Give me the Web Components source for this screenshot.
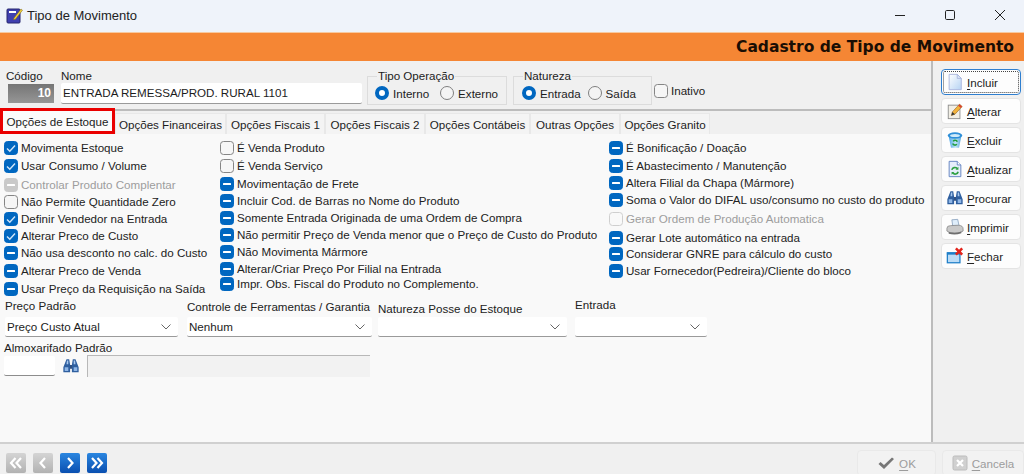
<!DOCTYPE html>
<html lang="pt-BR">
<head>
<meta charset="utf-8">
<title>Tipo de Movimento</title>
<style>
  html, body { margin: 0; height: 100%; overflow: hidden; }
  body { font: 11.6px "Liberation Sans", Arial, sans-serif; color: #1c1c1c; background: #f0f0f0; }
</style>
</head>
<body>
<tm-window>
  <tm-titlebar slot="title">Tipo de Movimento</tm-titlebar>
  <tm-banner slot="banner">Cadastro de Tipo de Movimento</tm-banner>

  <tm-header slot="header">
    <tm-field label="Código" style="margin-left:6px;width:48px">
      <tm-code>10</tm-code>
    </tm-field>
    <tm-field label="Nome" style="margin-left:7px;width:301px">
      <tm-input value="ENTRADA REMESSA/PROD. RURAL 1101" style="height:21px"></tm-input>
    </tm-field>
    <tm-group legend="Tipo Operação" style="margin-left:5px;width:140px;--gap:11px;--pad:7px">
      <tm-radio on>Interno</tm-radio>
      <tm-radio>Externo</tm-radio>
    </tm-group>
    <tm-group legend="Natureza" style="margin-left:6px;width:139px;--gap:7px;--pad:8px">
      <tm-radio on>Entrada</tm-radio>
      <tm-radio>Saída</tm-radio>
    </tm-group>
    <tm-check state="empty" style="margin:14px 0 0 2px">Inativo</tm-check>
  </tm-header>

  <tm-tabs slot="tabs">
    <tm-tab active style="width:115px">Opções de Estoque</tm-tab>
    <tm-tab style="width:111px">Opções Financeiras</tm-tab>
    <tm-tab style="width:99px">Opções Fiscais 1</tm-tab>
    <tm-tab style="width:100px">Opções Fiscais 2</tm-tab>
    <tm-tab style="width:105px">Opções Contábeis</tm-tab>
    <tm-tab style="width:90px">Outras Opções</tm-tab>
    <tm-tab style="width:90px">Opções Granito</tm-tab>
  </tm-tabs>

  <tm-panel slot="panel">
    <tm-checks slot="col1">
      <tm-check state="checked">Movimenta Estoque</tm-check>
      <tm-check state="checked" style="margin-top:1px">Usar Consumo / Volume</tm-check>
      <tm-check state="mixed" disabled style="margin-top:2px">Controlar Produto Complentar</tm-check>
      <tm-check state="empty">Não Permite Quantidade Zero</tm-check>
      <tm-check state="checked">Definir Vendedor na Entrada</tm-check>
      <tm-check state="checked">Alterar Preco de Custo</tm-check>
      <tm-check state="mixed">Não usa desconto no calc. do Custo</tm-check>
      <tm-check state="mixed" style="margin-top:1px">Alterar Preco de Venda</tm-check>
      <tm-check state="mixed" style="margin-top:1px">Usar Preço da Requisição na Saída</tm-check>
    </tm-checks>
    <tm-checks slot="col2">
      <tm-check state="empty">É Venda Produto</tm-check>
      <tm-check state="empty" style="margin-top:1px">É Venda Serviço</tm-check>
      <tm-check state="mixed" style="margin-top:1px">Movimentação de Frete</tm-check>
      <tm-check state="mixed">Incluir Cod. de Barras no Nome do Produto</tm-check>
      <tm-check state="mixed">Somente Entrada Originada de uma Ordem de Compra</tm-check>
      <tm-check state="mixed">Não permitir Preço de Venda menor que o Preço de Custo do Produto</tm-check>
      <tm-check state="mixed">Não Movimenta Mármore</tm-check>
      <tm-check state="mixed">Alterar/Criar Preço Por Filial na Entrada</tm-check>
      <tm-check state="mixed" style="margin-top:-2px">Impr. Obs. Fiscal do Produto no Complemento.</tm-check>
    </tm-checks>
    <tm-checks slot="col3">
      <tm-check state="mixed">É Bonificação / Doação</tm-check>
      <tm-check state="mixed" style="margin-top:1px">É Abastecimento / Manutenção</tm-check>
      <tm-check state="mixed">Altera Filial da Chapa (Mármore)</tm-check>
      <tm-check state="mixed">Soma o Valor do DIFAL uso/consumo no custo do produto</tm-check>
      <tm-check state="empty" disabled style="margin-top:2px">Gerar Ordem de Produção Automatica</tm-check>
      <tm-check state="mixed" style="margin-top:2px">Gerar Lote automático na entrada</tm-check>
      <tm-check state="mixed" style="margin-top:-1px">Considerar GNRE para cálculo do custo</tm-check>
      <tm-check state="mixed">Usar Fornecedor(Pedreira)/Cliente do bloco</tm-check>
    </tm-checks>

    <tm-combos slot="combos">
      <tm-field label="Preço Padrão" style="margin-left:5px;width:173px">
        <tm-combo value="Preço Custo Atual"></tm-combo>
      </tm-field>
      <tm-field label="Controle de Ferramentas / Garantia" style="margin-left:9px;width:185px;--dy:1px">
        <tm-combo value="Nenhum"></tm-combo>
      </tm-field>
      <tm-field label="Natureza Posse do Estoque" style="margin-left:6px;width:189px;--dy:3px">
        <tm-combo></tm-combo>
      </tm-field>
      <tm-field label="Entrada" style="margin-left:8px;width:132px;--dy:-1px">
        <tm-combo></tm-combo>
      </tm-field>
    </tm-combos>

    <tm-lookup slot="lookup" label="Almoxarifado Padrão"></tm-lookup>
  </tm-panel>

  <tm-sidebar slot="side">
    <tm-sidebtn icon="page" key="I" rest="ncluir" focused></tm-sidebtn>
    <tm-sidebtn icon="pencil" key="A" rest="lterar"></tm-sidebtn>
    <tm-sidebtn icon="bin" key="E" rest="xcluir"></tm-sidebtn>
    <tm-sidebtn icon="refresh" key="A" rest="tualizar"></tm-sidebtn>
    <tm-sidebtn icon="binoculars" key="P" rest="rocurar"></tm-sidebtn>
    <tm-sidebtn icon="printer" key="I" rest="mprimir"></tm-sidebtn>
    <tm-sidebtn icon="close" key="F" rest="echar"></tm-sidebtn>
  </tm-sidebar>

  <tm-footer slot="footer">
    <tm-nav kind="first" off slot="nav"></tm-nav>
    <tm-nav kind="prev" off slot="nav"></tm-nav>
    <tm-nav kind="next" slot="nav"></tm-nav>
    <tm-nav kind="last" slot="nav"></tm-nav>
    <tm-footbtn icon="ok" key="O" rest="K" style="width:79px"></tm-footbtn>
    <tm-footbtn icon="cancel" key="C" rest="ancela" style="width:82px;margin-left:6px"></tm-footbtn>
  </tm-footer>
</tm-window>

<script>
  const ICONS = {
    page: `<svg viewBox="0 0 20 20" width="18" height="18"><defs><linearGradient id="p" x1="0" y1="0" x2="1" y2="1"><stop offset="0" stop-color="#fff"/><stop offset="1" stop-color="#b5d3f3"/></linearGradient></defs><path d="M3.5 1.500h9l4.500 4.500v12.500h-13.500z" fill="url(#p)" stroke="#a9b4dd"/><path d="M12.500 1.500v4.500h4.500z" fill="#dbe7f8" stroke="#a9b4dd"/></svg>`,
    pencil: `<svg viewBox="0 0 20 20" width="18" height="18"><rect x="2.500" y="3.500" width="13" height="15" fill="#f2efe6" stroke="#8d8d8d"/><path d="M6 15l1-4L15 2.500l3 2.500-8 8.500z" fill="#f3b33d" stroke="#8a5a14" stroke-width=".6"/><path d="M15 2.500l3 2.500-1.500 1.700-3-2.600z" fill="#d9432f"/><path d="M6 15l1-4 3 2.500z" fill="#3a3a3a"/></svg>`,
    bin: `<svg viewBox="0 0 20 20" width="18" height="18"><defs><linearGradient id="b" x1="0" x2="1"><stop offset="0" stop-color="#4ea7e6"/><stop offset=".55" stop-color="#bde2f7"/><stop offset="1" stop-color="#5aa9dc"/></linearGradient></defs><path d="M3 6l2.500 12.500h9L17 6z" fill="url(#b)"/><ellipse cx="10" cy="5" rx="8" ry="3.500" fill="#2f8fd8"/><ellipse cx="10" cy="5" rx="5.500" ry="1.800" fill="#cfeafa"/><path d="M8 11.500a2.500 2.500 0 0 1 4.500.5M12 14.500a2.500 2.500 0 0 1-4.500-.5" fill="none" stroke="#1f9d3a" stroke-width="1.700"/></svg>`,
    refresh: `<svg viewBox="0 0 20 20" width="18" height="18"><path d="M3.500 1.500h9l4 4v13h-13z" fill="#e6eefb" stroke="#5d7fc0"/><path d="M12.500 1.500v4h4" fill="#fff" stroke="#5d7fc0"/><path d="M6.500 11a3.500 3.500 0 0 1 6-1.500M13.500 13a3.500 3.500 0 0 1-6 1.500" fill="none" stroke="#2fa043" stroke-width="1.800"/><path d="M13.800 7.500v3.200h-3.200zM6.200 16.500v-3.200h3.200z" fill="#2fa043"/></svg>`,
    binoculars: `<svg viewBox="0 0 20 20" width="18" height="18"><path d="M5 2.500h3l1 6v8.500H1.500v-5.500zM15 2.500h-3l-1 6v8.500h7.500v-5.500z" fill="#2f5f9f"/><path d="M9 9h2v4H9z" fill="#1c3f74"/><path d="M3 11.500h4v4H3zM13 11.500h4v4h-4z" fill="#8fb6e6"/><path d="M5.500 4h1.500v4H5zM13 4h1.500l.5 4h-2z" fill="#a8c8ef"/></svg>`,
    printer: `<svg viewBox="0 0 20 20" width="18" height="18"><path d="M6.500 2l6.500-.5 1.500 7-7 .5z" fill="#dfeefb" stroke="#7c97b5" stroke-width=".8"/><path d="M1 11.500q0-3 4-3l9-.5q5 .5 5 4v2.500q-3 2.500-9 2.500t-9-2.500z" fill="#c9c9c9" stroke="#808080" stroke-width=".8"/><path d="M3 15.500q7 2 14-.5v2q-7 2.500-14 .5z" fill="#6e6e6e"/></svg>`,
    close: `<svg viewBox="0 0 20 20" width="18" height="18"><rect x="1.500" y="6.500" width="14" height="11" fill="#bcdcf6" stroke="#1f7fc8" stroke-width="1.400"/><rect x="1" y="6" width="15" height="2.500" fill="#1f7fc8"/><path d="M11 1.500l7 7M18 1.500l-7 7" stroke="#e2231a" stroke-width="2.800"/></svg>`,
    ok: `<svg viewBox="0 0 18 14" width="18" height="14"><path d="M1.500 8l2-2 3.500 3L15 1.500l2 1.500L7 13z" fill="#777"/></svg>`,
    cancel: `<svg viewBox="0 0 16 16" width="16" height="16"><rect x="1" y="1" width="14" height="14" rx="1.500" fill="#d0d0d0" stroke="#bcbcbc"/><path d="M5 5l6 6M11 5l-6 6" stroke="#fff" stroke-width="2.200"/></svg>`,
  };

  // small helper, every element here is only static markup in an open shadow root
  function shadow(el, html) {
    el.attachShadow({ mode: 'open' }).innerHTML = html;
  }

  class TmWindow extends HTMLElement {
    constructor() {
      super();
      shadow(this, `
        <style>
          :host { display: grid; width: 1024px; height: 474px; overflow: hidden;
            grid-template-columns: 933px 91px; grid-template-rows: 32px 29px 50px 23px 1fr 32px;
            grid-template-areas: "t t" "b b" "h s" "x s" "p s" "f f"; }
          ::slotted([slot=title]) { grid-area: t; }
          ::slotted([slot=banner]) { grid-area: b; }
          ::slotted([slot=header]) { grid-area: h; }
          ::slotted([slot=tabs]) { grid-area: x; }
          ::slotted([slot=panel]) { grid-area: p; }
          ::slotted([slot=side]) { grid-area: s; }
          ::slotted([slot=footer]) { grid-area: f; }
        </style>
        <slot name="title"></slot><slot name="banner"></slot><slot name="header"></slot>
        <slot name="tabs"></slot><slot name="panel"></slot><slot name="side"></slot><slot name="footer"></slot>`);
    }
  }

  class TmTitlebar extends HTMLElement {
    constructor() {
      super();
      shadow(this, `
        <style>
          :host { display: flex; align-items: center; background: #eff3fa; color: #222; font-size: 13px;
            padding: 0 0 2px 6px; box-sizing: border-box; }
          .ico { width: 17px; height: 17px; margin-right: 4px; }
          .txt { flex: 1; }
          .btns { display: flex; align-items: center; margin-right: -1px; }
          .btns span { display: flex; justify-content: center; width: 50px; }
          .btns svg { display: block; width: 12px; height: 12px; }
        </style>
        <svg class="ico" viewBox="0 0 17 17"><rect x="1" y="2" width="13" height="14" rx="1" fill="#3f3fb0" stroke="#26266e"/><rect x="3" y="4" width="7" height="2" fill="#fff"/><path d="M8 11l7-9 1.500 1.200-7 9-2 .5z" fill="#f2d13c" stroke="#7a6210" stroke-width=".5"/></svg>
        <span class="txt"><slot></slot></span>
        <div class="btns">
          <span><svg viewBox="0 0 12 12"><path d="M1 6.500h10" stroke="#222" stroke-width="1" fill="none"/></svg></span>
          <span><svg viewBox="0 0 12 12"><rect x="1.500" y="1.500" width="9" height="9" rx="1.200" stroke="#222" fill="none"/></svg></span>
          <span><svg viewBox="0 0 12 12"><path d="M1 1l10 10M11 1L1 11" stroke="#222" stroke-width="1" fill="none"/></svg></span>
        </div>`);
    }
  }

  class TmBanner extends HTMLElement {
    constructor() {
      super();
      shadow(this, `
        <style>
          :host { display: flex; align-items: center; justify-content: flex-end; padding-right: 10px;
            background: #f58634; border-top: 1px solid #f7c9a0; box-sizing: border-box; color: #1a0e04;
            font: bold 15.500px "DejaVu Sans", Tahoma, sans-serif; }
        </style><slot></slot>`);
    }
  }

  class TmHeader extends HTMLElement {
    constructor() {
      super();
      shadow(this, `
        <style>
          :host { display: flex; align-items: flex-start; box-sizing: border-box; padding-top: 7px;
            background: #f0f0f0; border-bottom: 2px solid #bcbcbc; border-right: 2px solid #bcbcbc; }
        </style><slot></slot>`);
    }
  }

  class TmField extends HTMLElement {
    constructor() {
      super();
      shadow(this, `
        <style>
          :host { display: block; flex: none; }
          .l { display: block; position: relative; top: var(--dy, 0); line-height: 15px; height: 15px; white-space: nowrap; color: #222; }
        </style>
        <span class="l">${this.getAttribute('label')}</span><slot></slot>`);
    }
  }

  class TmCode extends HTMLElement {
    constructor() {
      super();
      shadow(this, `
        <style>
          :host { display: block; height: 19px; line-height: 19px; margin: 1px 0 0 2px; box-sizing: border-box;
            background: linear-gradient(#757575, #969696); color: #fff; font-weight: bold; text-align: right; padding-right: 3px; font-size: 12px; }
        </style><slot></slot>`);
    }
  }

  class TmInput extends HTMLElement {
    constructor() {
      super();
      shadow(this, `
        <style>
          :host { display: block; box-sizing: border-box; background: #fff; border-bottom: 1px solid #9a9a9a;
            border-radius: 2px; padding-left: 2px; line-height: 19px; white-space: nowrap; }
        </style>${this.getAttribute('value') || ''}`);
    }
  }

  class TmGroup extends HTMLElement {
    constructor() {
      super();
      shadow(this, `
        <style>
          :host { display: block; flex: none; box-sizing: border-box; height: 29px; margin-top: 8px;
            border: 1px solid #dcdcdc; position: relative; }
          .leg { position: absolute; left: 9px; top: -8px; background: #f0f0f0; padding: 0 1px; line-height: 14px; white-space: nowrap; }
          .row { display: flex; gap: var(--gap, 11px); padding: 8px 0 0 var(--pad, 8px); }
        </style>
        <span class="leg">${this.getAttribute('legend')}</span>
        <div class="row"><slot></slot></div>`);
    }
  }

  class TmRadio extends HTMLElement {
    constructor() {
      super();
      const on = this.hasAttribute('on');
      shadow(this, `
        <style>
          :host { display: flex; align-items: center; height: 16px; white-space: nowrap; }
          i { display: block; box-sizing: border-box; width: 14px; height: 14px; border-radius: 50%; margin-right: 4px;
            border: ${on ? '4px solid #0067c0' : '1px solid #7f7f7f'}; background: ${on ? '#fff' : '#f4f4f4'}; }
        </style><i></i><slot></slot>`);
    }
  }

  class TmTabs extends HTMLElement {
    constructor() {
      super();
      shadow(this, `
        <style>
          :host { display: flex; align-items: flex-end; background: #f0f0f0; border-right: 2px solid #bcbcbc; box-sizing: border-box; }
        </style><slot></slot>`);
    }
  }

  class TmTab extends HTMLElement {
    constructor() {
      super();
      const active = this.hasAttribute('active');
      shadow(this, `
        <style>
          :host { display: block; flex: none; box-sizing: border-box; text-align: center; white-space: nowrap; position: relative; }
          div { box-sizing: border-box; height: 21px; line-height: 21px; background: #f4f4f4; border: 1px solid #e8e8e8; border-bottom: 0; }
          .active { height: 26px; line-height: 22px; background: #fbfbfb; border: 3px solid #ea0000; position: relative; }
        </style><div class="${active ? 'active' : ''}"><slot></slot></div>`);
    }
  }

  class TmPanel extends HTMLElement {
    constructor() {
      super();
      shadow(this, `
        <style>
          :host { display: block; box-sizing: border-box; background: #f9f9f9; border-right: 2px solid #bcbcbc; }
          .cols { display: grid; grid-template-columns: 216px 389px 1fr; padding: 5px 0 0 4px; height: 164px; box-sizing: border-box; }
        </style>
        <div class="cols"><slot name="col1"></slot><slot name="col2"></slot><slot name="col3"></slot></div>
        <slot name="combos"></slot><slot name="lookup"></slot>`);
    }
  }

  class TmChecks extends HTMLElement {
    constructor() {
      super();
      shadow(this, `<style>:host { display: block; }</style><slot></slot>`);
    }
  }

  class TmCheck extends HTMLElement {
    constructor() {
      super();
      const state = this.getAttribute('state');
      const dis = this.hasAttribute('disabled');
      const fill = state === 'empty' ? (dis ? '#f9f9f9' : '#f6f6f6') : (dis ? '#c9c9c9' : '#0067c0');
      const border = state === 'empty' ? (dis ? '#cfcfcf' : '#858585') : fill;
      const mark = state === 'checked'
        ? '<path d="M3 7.500l2.800 2.800L11 4.500" fill="none" stroke="#cfe6fa" stroke-width="1.400"/>'
        : state === 'mixed' ? '<rect x="3" y="6" width="8" height="2" rx=".5" fill="#fff"/>' : '';
      shadow(this, `
        <style>
          :host { display: flex; align-items: center; height: 17px; white-space: nowrap; color: ${dis ? '#9d9d9d' : '#222'}; }
          svg { display: block; flex: none; margin-right: 3px; }
        </style>
        <svg width="14" height="14" viewBox="0 0 14 14"><rect x=".5" y=".5" width="13" height="13" rx="3" fill="${fill}" stroke="${border}"/>${mark}</svg><slot></slot>`);
    }
  }

  class TmCombos extends HTMLElement {
    constructor() {
      super();
      shadow(this, `<style>:host { display: flex; height: 43px; align-items: flex-start; }</style><slot></slot>`);
    }
  }

  class TmCombo extends HTMLElement {
    constructor() {
      super();
      shadow(this, `
        <style>
          :host { display: flex; align-items: center; justify-content: space-between; box-sizing: border-box; height: 20px; margin-top: 4px;
            background: #fff; border-bottom: 1px solid #9a9a9a; border-radius: 2px; padding: 0 7px 0 2px; white-space: nowrap; }
          svg { display: block; }
        </style>
        <span>${this.getAttribute('value') || ''}</span>
        <svg width="10" height="6" viewBox="0 0 10 6"><path d="M.5.500L5 5 9.500.500" fill="none" stroke="#666"/></svg>`);
    }
  }

  class TmLookup extends HTMLElement {
    constructor() {
      super();
      shadow(this, `
        <style>
          :host { display: block; padding-left: 4px; }
          .l { display: block; line-height: 14px; height: 14px; }
          .row { display: flex; align-items: flex-start; }
          .code { width: 51px; height: 20px; margin-top: 1px; box-sizing: border-box; background: #fff; border-bottom: 1px solid #8d8d8d; border-radius: 2px; }
          .find { margin: 2px 7px 0 7px; width: 18px; height: 18px; }
          .find svg { display: block; width: 18px; height: 18px; }
          .desc { width: 283px; height: 22px; box-sizing: border-box; background: #f2f2f2; border-top: 1px solid #b8b8b8; border-left: 1px solid #b8b8b8; }
        </style>
        <span class="l">${this.getAttribute('label')}</span>
        <div class="row"><div class="code"></div><div class="find">${ICONS.binoculars}</div><div class="desc"></div></div>`);
    }
  }

  class TmSidebar extends HTMLElement {
    constructor() {
      super();
      shadow(this, `
        <style>
          :host { display: flex; flex-direction: column; gap: 3px; box-sizing: border-box; padding: 8px 3px 0 8px; background: #f0f0f0; }
        </style><slot></slot>`);
    }
  }

  class TmSidebtn extends HTMLElement {
    constructor() {
      super();
      const focused = this.hasAttribute('focused');
      shadow(this, `
        <style>
          :host { display: flex; align-items: center; box-sizing: border-box; height: 26px; background: #fdfdfd; border-radius: 4px;
            padding-left: 4px; color: #222; border: 1px solid ${focused ? '#2f7fd0' : '#e4e4e4'};
            ${focused ? 'outline: 1px dotted #444; outline-offset: -3px;' : ''} }
          svg { display: block; margin-right: 3px; flex: none; }
          u { text-underline-offset: 2px; }
        </style>
        ${ICONS[this.getAttribute('icon')]}<span><u>${this.getAttribute('key')}</u>${this.getAttribute('rest')}</span>`);
    }
  }

  class TmFooter extends HTMLElement {
    constructor() {
      super();
      shadow(this, `
        <style>
          :host { display: flex; align-items: flex-start; box-sizing: border-box; background: #f0f0f0; border-top: 2px solid #d0d0d0; }
          .nav { display: flex; gap: 7px; padding: 9px 0 0 6px; flex: 1; }
          .btns { display: flex; padding-top: 6px; }
        </style>
        <div class="nav"><slot name="nav"></slot></div>
        <div class="btns"><slot></slot></div>`);
    }
  }

  class TmNav extends HTMLElement {
    constructor() {
      super();
      const kind = this.getAttribute('kind');
      const off = this.hasAttribute('off');
      const paths = {
        first: 'M9.500 5L5 10l4.500 5M15 5l-4.500 5 4.500 5',
        prev: 'M12 5l-4.500 5 4.500 5',
        next: 'M8 5l4.500 5L8 15',
        last: 'M5 5l4.500 5L5 15M10.500 5L15 10l-4.500 5',
      };
      shadow(this, `
        <style>
          :host { display: block; width: 20px; height: 20px; border-radius: 2px;
            background: ${off ? 'linear-gradient(#d4d4d4,#b2b2b2)' : 'linear-gradient(#2a86e0,#0a4fb0)'}; }
          svg { display: block; }
        </style>
        <svg width="20" height="20" viewBox="0 0 20 20"><path d="${paths[kind]}" fill="none" stroke="#fff" stroke-width="2.200"/></svg>`);
    }
  }

  class TmFootbtn extends HTMLElement {
    constructor() {
      super();
      shadow(this, `
        <style>
          :host { display: flex; align-items: center; justify-content: center; gap: 4px; box-sizing: border-box; height: 26px;
            background: #f2f2f2; border: 1px solid #e9e9e9; border-radius: 4px; color: #9c9c9c; }
          svg { display: block; }
          u { text-underline-offset: 2px; }
        </style>
        ${ICONS[this.getAttribute('icon')]}<span><u>${this.getAttribute('key')}</u>${this.getAttribute('rest')}</span>`);
    }
  }

  customElements.define('tm-window', TmWindow);
  customElements.define('tm-titlebar', TmTitlebar);
  customElements.define('tm-banner', TmBanner);
  customElements.define('tm-header', TmHeader);
  customElements.define('tm-field', TmField);
  customElements.define('tm-code', TmCode);
  customElements.define('tm-input', TmInput);
  customElements.define('tm-group', TmGroup);
  customElements.define('tm-radio', TmRadio);
  customElements.define('tm-tabs', TmTabs);
  customElements.define('tm-tab', TmTab);
  customElements.define('tm-panel', TmPanel);
  customElements.define('tm-checks', TmChecks);
  customElements.define('tm-check', TmCheck);
  customElements.define('tm-combos', TmCombos);
  customElements.define('tm-combo', TmCombo);
  customElements.define('tm-lookup', TmLookup);
  customElements.define('tm-sidebar', TmSidebar);
  customElements.define('tm-sidebtn', TmSidebtn);
  customElements.define('tm-footer', TmFooter);
  customElements.define('tm-nav', TmNav);
  customElements.define('tm-footbtn', TmFootbtn);
</script>
</body>
</html>
